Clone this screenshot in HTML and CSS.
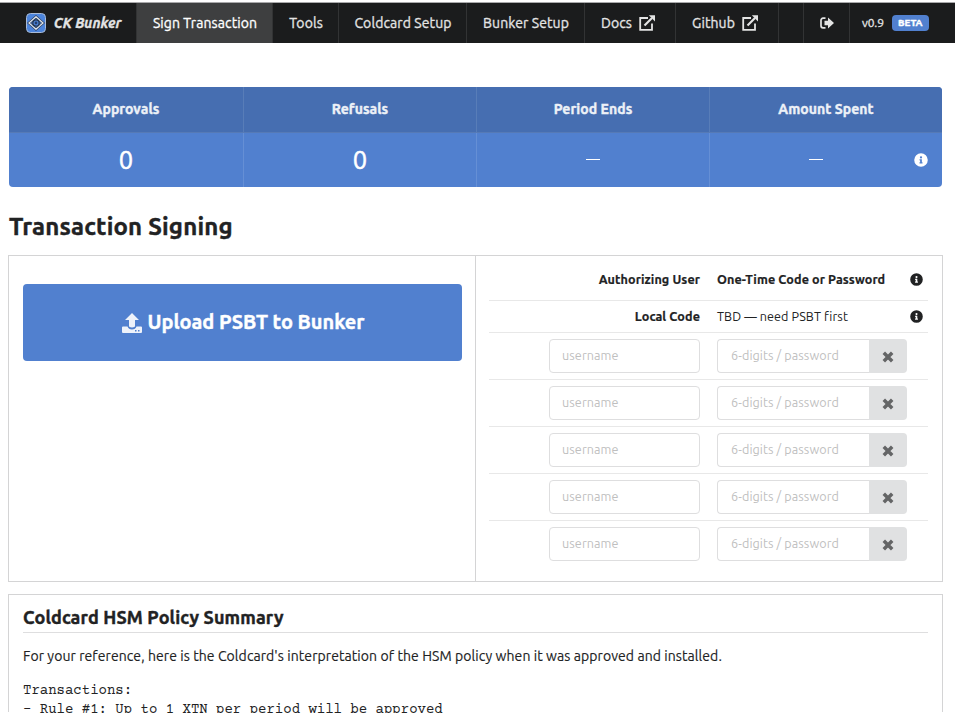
FILE: index.html
```html
<!DOCTYPE html>
<html lang="en">
<head>
<meta charset="utf-8">
<title>CK Bunker</title>
<link rel="stylesheet" href="styles.css">
</head>
<body>
<svg class="defs" aria-hidden="true">
  <symbol id="ext" viewBox="0 0 16 16"><path d="M9 3H1.200v11.800H13V8.500" fill="none" stroke="currentColor" stroke-width="1.800"/><path d="M5.500 10.500 13 3" fill="none" stroke="currentColor" stroke-width="2.100"/><path d="M9.800.3H16v6.200z" fill="currentColor"/></symbol>
  <symbol id="info" viewBox="0 0 512 512"><path fill="currentColor" d="M256 8a248 248 0 1 0 0 496 248 248 0 0 0 0-496zm0 110a42 42 0 1 1 0 84 42 42 0 0 1 0-84zm56 254c0 7-5 12-12 12h-88c-7 0-12-5-12-12v-24c0-7 5-12 12-12h12v-64h-12c-7 0-12-5-12-12v-24c0-7 5-12 12-12h64c7 0 12 5 12 12v100h12c7 0 12 5 12 12z"/></symbol>
  <symbol id="times" viewBox="0 0 12 12"><path d="m1.800 1.800 8.400 8.400m0-8.400-8.400 8.400" stroke="currentColor" stroke-width="3.500" fill="none"/></symbol>
</svg>
<nav class="menu">
  <a class="item brand"><svg class="logo" viewBox="0 0 20 20"><rect x=".5" y=".5" width="19" height="19" rx="4" fill="#4c84dc" stroke="#a9bad6"/><path d="M3 10Q6 7.500 10 3.800 14 7.500 17 10 14 12.500 10 16.200 6 12.500 3 10z" fill="#4c84dc" stroke="#33425c" stroke-width="2.600"/><path d="M3 10Q6 7.500 10 3.800 14 7.500 17 10 14 12.500 10 16.200 6 12.500 3 10z" fill="none" stroke="#dce4ee" stroke-width="1.200"/><circle cx="10" cy="10" r="3.200" fill="#4c84dc" stroke="#24364f" stroke-width="1.300"/><circle cx="10" cy="10" r="1.400" fill="#27406d"/></svg><span>CK Bunker</span></a>
  <a class="item sign active"><span>Sign Transaction</span></a>
  <a class="item tools"><span>Tools</span></a>
  <a class="item coldcard"><span>Coldcard Setup</span></a>
  <a class="item bunker"><span>Bunker Setup</span></a>
  <a class="item docs"><span>Docs</span><svg class="ext"><use href="#ext"/></svg></a>
  <a class="item github"><span>Github</span><svg class="ext"><use href="#ext"/></svg></a>
  <span class="item gap"></span>
  <a class="item logout"><svg class="out" viewBox="0 0 14 12"><path d="M5.500 1.200H3A2 2 0 0 0 1 3.200v5.600a2 2 0 0 0 2 2h2.500" fill="none" stroke="currentColor" stroke-width="1.700"/><path d="M8 .5v3.300H4.500v4.400H8v3.300L14 6z" fill="currentColor"/></svg></a>
  <span class="item version"><span>v0.9</span><b class="beta">BETA</b></span>
</nav>
<main class="page">
  <section class="stats">
    <div class="head"><span>Approvals</span></div><div class="head"><span>Refusals</span></div><div class="head"><span>Period Ends</span></div><div class="head"><span>Amount Spent</span></div>
    <div class="value">0</div><div class="value">0</div><div class="value"><i class="dash"></i></div><div class="value last"><i class="dash"></i><svg class="info"><use href="#info"/></svg></div>
  </section>
  <h1><span>Transaction Signing</span></h1>
  <section class="signing">
    <div class="left"><button class="upload"><svg class="up" viewBox="0 0 20 20"><path d="M10 0 17 7h-4v6.500q-3 2-6 0V7H3z" fill="currentColor"/><path fill-rule="evenodd" d="M1 13.500h4.500q1 3 4.500 3t4.500-3H19a1 1 0 0 1 1 1v4.500a1 1 0 0 1-1 1H1a1 1 0 0 1-1-1v-4.500a1 1 0 0 1 1-1zM13 17v1.400h1.500V17zm3 0v1.400h1.500V17z" fill="currentColor"/></svg><span>Upload PSBT to Bunker</span></button></div>
    <div class="right">
      <div class="row header"><b class="label">Authorizing User</b><b>One-Time Code or Password</b><svg class="info"><use href="#info"/></svg></div>
      <div class="row local"><b class="label">Local Code</b><span class="tbd">TBD — need PSBT first</span><svg class="info"><use href="#info"/></svg></div>
      <div class="row entry"><input class="name" placeholder="username"><div class="pass"><input placeholder="6-digits / password"><button><svg><use href="#times"/></svg></button></div></div>
      <div class="row entry"><input class="name" placeholder="username"><div class="pass"><input placeholder="6-digits / password"><button><svg><use href="#times"/></svg></button></div></div>
      <div class="row entry"><input class="name" placeholder="username"><div class="pass"><input placeholder="6-digits / password"><button><svg><use href="#times"/></svg></button></div></div>
      <div class="row entry"><input class="name" placeholder="username"><div class="pass"><input placeholder="6-digits / password"><button><svg><use href="#times"/></svg></button></div></div>
      <div class="row entry"><input class="name" placeholder="username"><div class="pass"><input placeholder="6-digits / password"><button><svg><use href="#times"/></svg></button></div></div>
    </div>
  </section>
  <section class="policy">
    <h2><span>Coldcard HSM Policy Summary</span></h2>
    <p><span>For your reference, here is the Coldcard's interpretation of the HSM policy when it was approved and installed.</span></p>
    <pre>Transactions:
- Rule #1: Up to 1 XTN per period will be approved</pre>
  </section>
</main>
</body>
</html>
```
FILE: styles.css
```css
* { box-sizing: border-box; }
body { margin: 0; height: 713px; overflow: hidden; background: #fff; color: #212223; font: 14px/20px Ubuntu, "Noto Sans", sans-serif; }
.defs { position: absolute; width: 0; height: 0; }
span, b { white-space: nowrap; }
b, h1, h2, .head, .upload span { -webkit-text-stroke: .4px currentColor; }
.menu { display: flex; height: 41px; margin-top: 2px; background: #1b1c1d; border-top: 1px solid #a9a9ab; color: #e4e4e4; }
.item { display: flex; align-items: center; justify-content: center; border-right: 1px solid #323334; flex: none; letter-spacing: .1px; -webkit-text-stroke: .3px currentColor; }
.brand { width: 137px; padding-left: 11px; gap: 8px; font-weight: 700; font-style: italic; letter-spacing: -.02px; -webkit-text-stroke: .35px currentColor; }
.logo { width: 20px; height: 20px; }
.sign { width: 136px; padding-left: 1px; }
.active { background: #3e3f40; color: #fff; }
.tools { width: 66px; padding-left: 1px; }
.coldcard { width: 128px; padding-left: 1px; }
.bunker { width: 118px; padding-left: 1px; }
.docs { width: 91px; gap: 7px; padding-right: 4px; }
.github { width: 103px; gap: 7px; padding-right: 4px; }
.ext { width: 16px; height: 16px; }
.gap { width: 25px; }
.logout { width: 46px; }
.out { width: 14px; height: 12px; }
.version { border: 0; padding-left: 12px; gap: 8px; font-size: 12px; letter-spacing: -.15px; }
.beta { width: 37px; height: 16px; border-radius: 4px; background: #5180cf; color: #fff; font-size: 9.800px; line-height: 16px; letter-spacing: 0; text-align: center; }
.page { margin: 44px 12px 0 8px; }
.stats { margin: 0 1px; display: grid; grid-template-columns: 235px 233px 233px 1fr; grid-template-rows: 46px 54px; border-radius: 4px; overflow: hidden; background: #5180cf; color: #fff; }
.head { display: flex; align-items: center; justify-content: center; padding-bottom: 1px; font-weight: 700; letter-spacing: .06px; background: #466eb1; color: #edf1f7; border-right: 1px solid #587db8; border-bottom: 1px solid #567ab6; }
.value { display: flex; align-items: center; justify-content: center; font-size: 25.500px; -webkit-text-stroke: .5px currentColor; border-right: 1px solid #658fd5; }
.head:nth-child(4), .value.last { border-right: 0; }
.dash { width: 14px; height: 1.500px; margin-top: -1px; background: #fff; }
.info { width: 13px; height: 13px; }
.last { padding: 0 14.500px 0 99px; justify-content: space-between; }
.value.last .info { width: 14px; height: 14px; margin-top: -1px; }
h1 { margin: 24px 0 0 1px; font-size: 24px; line-height: 31px; letter-spacing: .18px; }
.signing { display: flex; margin-top: 13px; height: 327px; border: 1px solid #d4d4d5; }
.left { width: 467px; padding: 28px 13px 0 14px; border-right: 1px solid #d4d4d5; }
.upload { width: 439px; height: 77px; border: 0; border-radius: 4px; background: #5180cf; color: #fff; display: flex; align-items: center; justify-content: center; gap: 6px; padding: 0 0 2px 1px; font: 700 20px Ubuntu, "Noto Sans", sans-serif; letter-spacing: -.03px; }
.up { width: 20px; height: 20px; opacity: .9; margin-top: 3px; }
.right { flex: 1; padding: 0 14px 0 13px; font-size: 12.600px; }
.row { display: flex; align-items: center; border-bottom: 1px solid #e8e8e8; height: 47px; padding-left: 60px; }
.row.header { height: 45px; padding: 2px 5px 0 0; }
.row.local { height: 32px; padding: 0 5px 1px 0; }
.row:last-child { border-color: transparent; }
.row b, .tbd { letter-spacing: .09px; }
.row b { -webkit-text-stroke-width: .2px; }
.label { width: 211px; display: flex; justify-content: flex-end; margin-right: 17px; }
.row > .info { margin-left: auto; }
input { height: 34px; border: 1px solid #dededf; border-radius: 4px; padding: 0 12px 2px; font: 12.600px Ubuntu, "Noto Sans", sans-serif; letter-spacing: .09px; background: #fff; min-width: 0; }
input::placeholder { color: #bfbfbf; opacity: 1; }
.name { width: 151px; margin-right: 17px; }
.pass { width: 190px; display: flex; }
.pass input { width: 152px; border-right: 0; border-radius: 4px 0 0 4px; padding-left: 13px; }
.pass button { width: 38px; height: 34px; border: 0; border-radius: 0 4px 4px 0; background: #e0e1e2; color: #646566; display: flex; align-items: center; justify-content: center; padding: 1px 1px 0 0; }
.pass svg { width: 12px; height: 12px; }
.policy { height: 118px; margin-top: 12px; padding: 9px 14px 0; border: 1px solid #d4d4d5; border-bottom: 0; }
h2 { margin: 0; height: 29px; border-bottom: 1px solid #dededf; font-size: 18px; line-height: 27px; letter-spacing: .14px; }
p { margin: 13px 0 16px; letter-spacing: .078px; -webkit-text-stroke: .15px currentColor; }
pre { margin: 0; font: 14px/19px "Courier Prime", "Nimbus Mono PS", "Liberation Mono", monospace; }
```
